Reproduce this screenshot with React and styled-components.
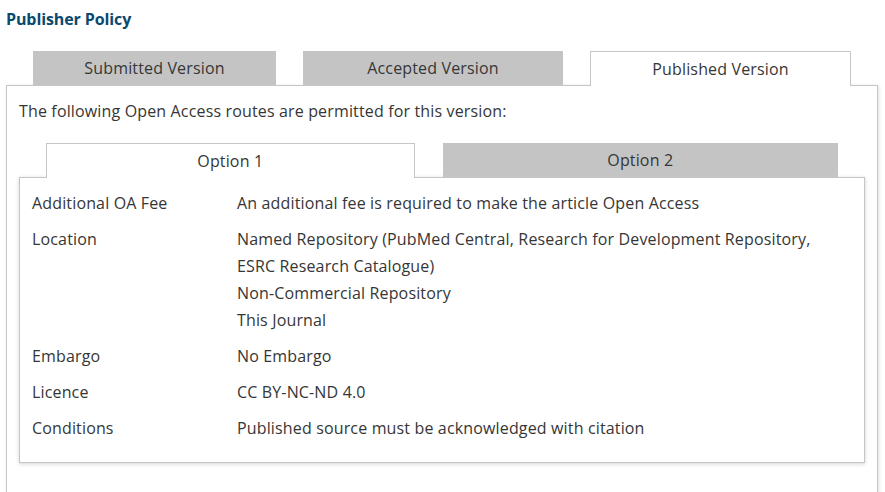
import React from "react";
import styled, { createGlobalStyle } from "styled-components";

const Global = createGlobalStyle`
  html, body { margin: 0; padding: 0; background: #fff; }
  body { font-family: "Open Sans", "Liberation Sans", sans-serif; color: #363636; }
  * { box-sizing: border-box; }
`;

const Page = styled.div`
  padding: 7px 7px 0 6px;
  height: 492px;
  overflow: hidden;
`;

const Title = styled.h2`
  margin: 0;
  font-size: 16px;
  line-height: 24px;
  font-weight: 700;
  color: #0b4a6f;
  letter-spacing: -0.1px;
`;

const TabRow = styled.div`
  display: flex;
  gap: ${(p) => p.$gap}px;
  padding: 0 ${(p) => p.$pad}px;
  margin-top: ${(p) => p.$top}px;
  position: relative;
  z-index: 1;
`;

const Tab = styled.div`
  width: ${(p) => p.$w}px;
  height: ${(p) => (p.$active ? 35 : 34)}px;
  margin-bottom: ${(p) => (p.$active ? -1 : 0)}px;
  padding-bottom: ${(p) => (p.$active ? 1 : 0)}px;
  display: flex;
  align-items: center;
  justify-content: center;
  font-size: 16px;
  letter-spacing: 0.15px;
  color: #363636;
  background: ${(p) => (p.$active ? "#fff" : "#c4c4c4")};
  border: ${(p) => (p.$active ? "1px solid #c6c6c6" : "none")};
  border-bottom: none;
`;

const Panel = styled.div`
  border: 1px solid #c6c6c6;
  box-shadow: 1px 1px 4px rgba(0, 0, 0, 0.12);
  padding: 13px 12px 30px 12px;
  height: 420px;
`;

const Intro = styled.p`
  margin: 0;
  font-size: 16px;
  line-height: 24px;
  letter-spacing: 0.15px;
`;

const OptionBox = styled.div`
  border: 1px solid #c6c6c6;
  box-shadow: 0 1px 4px rgba(0, 0, 0, 0.18);
  padding: 12px 12px 11px 12px;
  background: #fff;
`;

const Row = styled.div`
  display: grid;
  grid-template-columns: 205px 1fr;
  font-size: 16px;
  line-height: 27px;
  letter-spacing: 0.15px;
  margin-bottom: 9px;
`;

const Label = styled.div``;

const Value = styled.div``;

const rows = [
  ["Additional OA Fee", ["An additional fee is required to make the article Open Access"]],
  [
    "Location",
    [
      "Named Repository (PubMed Central, Research for Development Repository, ESRC Research Catalogue)",
      "Non-Commercial Repository",
      "This Journal",
    ],
  ],
  ["Embargo", ["No Embargo"]],
  ["Licence", ["CC BY-NC-ND 4.0"]],
  ["Conditions", ["Published source must be acknowledged with citation"]],
];

export default function App() {
  return (
    <>
      <Global />
      <Page>
        <Title>Publisher Policy</Title>
        <TabRow $gap={27} $pad={27} $top={20}>
          <Tab $w={243}>Submitted Version</Tab>
          <Tab $w={260}>Accepted Version</Tab>
          <Tab $w={261} $active>Published Version</Tab>
        </TabRow>
        <Panel>
          <Intro>The following Open Access routes are permitted for this version:</Intro>
          <TabRow $gap={28} $pad={27} $top={20}>
            <Tab $w={369} $active>Option 1</Tab>
            <Tab $w={396}>Option 2</Tab>
          </TabRow>
          <OptionBox>
            {rows.map(([label, values]) => (
              <Row key={label}>
                <Label>{label}</Label>
                <Value>
                  {values.map((v) => (
                    <div key={v}>{v}</div>
                  ))}
                </Value>
              </Row>
            ))}
          </OptionBox>
        </Panel>
      </Page>
    </>
  );
}
